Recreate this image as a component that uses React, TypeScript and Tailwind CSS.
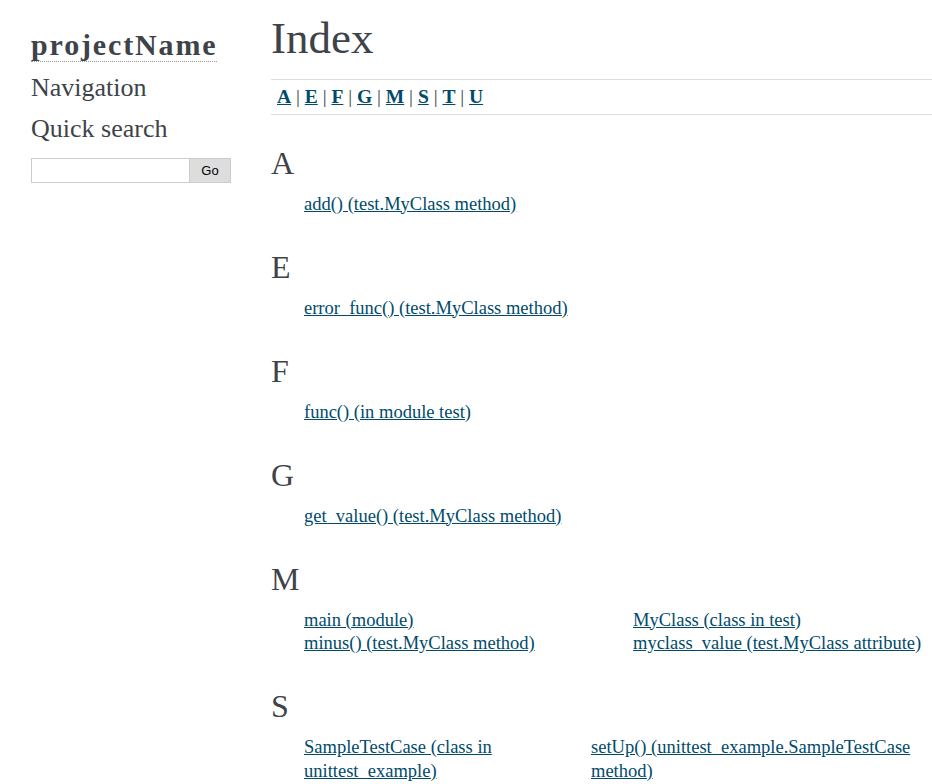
import React from 'react';

type Entry = { lines: string[] };

interface Section {
  letter: string;
  cols: Entry[][];
  grid?: string;
}

const sections: Section[] = [
  { letter: 'A', cols: [[{ lines: ['add() (test.MyClass method)'] }]] },
  { letter: 'E', cols: [[{ lines: ['error_func() (test.MyClass method)'] }]] },
  { letter: 'F', cols: [[{ lines: ['func() (in module test)'] }]] },
  { letter: 'G', cols: [[{ lines: ['get_value() (test.MyClass method)'] }]] },
  {
    letter: 'M',
    grid: 'grid-cols-[329px_1fr]',
    cols: [
      [{ lines: ['main (module)'] }, { lines: ['minus() (test.MyClass method)'] }],
      [{ lines: ['MyClass (class in test)'] }, { lines: ['myclass_value (test.MyClass attribute)'] }],
    ],
  },
  {
    letter: 'S',
    grid: 'grid-cols-[287px_1fr]',
    cols: [
      [{ lines: ['SampleTestCase (class in', 'unittest_example)'] }],
      [{ lines: ['setUp() (unittest_example.SampleTestCase', 'method)'] }],
    ],
  },
  {
    letter: 'T',
    grid: 'grid-cols-[287px_1fr]',
    cols: [
      [{ lines: ['tearDown() (unittest_example.', 'SampleTestCase method)'] }],
      [{ lines: ['test (module)'] }, { lines: ['test_sample() (unittest_example.', 'SampleTestCase method)'] }],
    ],
  },
  { letter: 'U', cols: [[{ lines: ['unittest_example (module)'] }]] },
];

const letters = ['A', 'E', 'F', 'G', 'M', 'S', 'T', 'U'];

const EntryList: React.FC<{ entries: Entry[] }> = ({ entries }) => (
  <ul className="pl-[33px]">
    {entries.map((e, i) => (
      <li key={i} className="whitespace-nowrap">
        <a href="#" className="text-[#004B6B] underline">
          {e.lines.map((l, j) => (
            <React.Fragment key={j}>
              {j > 0 && <br />}
              {l}
            </React.Fragment>
          ))}
        </a>
      </li>
    ))}
  </ul>
);

export default function App() {
  return (
    <div className="flex min-h-screen bg-white text-[#3E4349] font-['Liberation_Serif',serif]">
      {/* sidebar */}
      <div className="w-[271px] shrink-0 pl-[31px] pt-[27px]">
        <h1 className="text-[30px] leading-[36px] font-bold tracking-[1.85px]">
          <a href="#" className="border-b border-dotted border-[#999]">projectName</a>
        </h1>
        <h3 className="mt-[9px] text-[26px] leading-[32px]">Navigation</h3>
        <h3 className="mt-[9px] text-[26px] leading-[32px]">Quick search</h3>
        <form className="mt-[13px] flex w-[200px] h-[25px]">
          <input type="text" className="w-[159px] border border-[#ccc] bg-white outline-none" />
          <button
            type="button"
            className="flex-1 border border-l-0 border-[#ccc] bg-[#ddd] text-[13px] font-['Liberation_Sans',sans-serif] text-black"
          >
            Go
          </button>
        </form>
      </div>

      {/* body */}
      <div className="w-[661px] pt-[12px] text-[18.5px] leading-[23.5px]">
        <h1 className="text-[45px] leading-[52px]">Index</h1>

        <div className="mt-[15px] border-y border-[#ddd] px-[6px] text-[19.5px] leading-[34px]">
          {letters.map((l, i) => (
            <React.Fragment key={l}>
              {i > 0 && ' | '}
              <a href="#" className="font-bold text-[#004B6B] underline">{l}</a>
            </React.Fragment>
          ))}
        </div>

        <div className="mt-[27.5px]">
          {sections.map((s) => (
            <div key={s.letter} className="pb-[30.5px]">
              <h2 className="text-[32px] leading-[40px]">{s.letter}</h2>
              <div className={s.grid ? `mt-[10px] grid ${s.grid}` : 'mt-[10px]'}>
                {s.cols.map((c, i) => (
                  <EntryList key={i} entries={c} />
                ))}
              </div>
            </div>
          ))}
        </div>
      </div>
    </div>
  );
}
